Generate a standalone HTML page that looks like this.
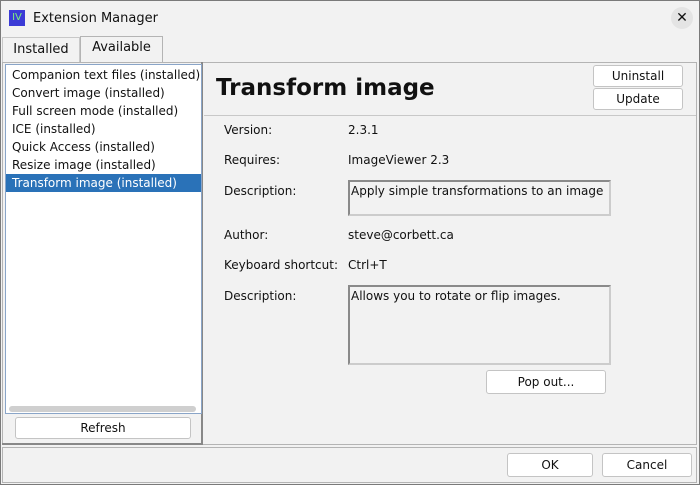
<!DOCTYPE html>
<html><head><style>
*{box-sizing:border-box;margin:0;padding:0}
body{width:700px;height:485px;background:#f2f2f2;font-family:"DejaVu Sans","Liberation Sans",sans-serif;font-size:12px;color:#111;position:relative;overflow:hidden}
.a{position:absolute}
.btn{position:absolute;background:#fff;border:1px solid #c4c4c4;border-radius:3px;text-align:center;line-height:20px;font-size:12px}
.lbl{position:absolute;left:224px}
.val{position:absolute;left:348px}
.ta{position:absolute;left:348px;width:263px;border:2px solid #8a8a8a;border-right-color:#ccc;border-bottom-color:#ccc;background:#f2f2f2;padding:2px 1px 0;line-height:15px}
.li{height:18px;line-height:18px;padding-left:6px;white-space:nowrap}
</style></head><body>
<div class="a" style="left:0;top:0;width:700px;height:485px;border:1px solid #7a7a7a"></div>
<div class="a" style="left:9px;top:10px;width:16px;height:16px;background:#3b3bd6;color:#7ef07e;font-size:10px;line-height:16px;text-align:center">IV</div>
<div class="a" style="left:33px;top:11px;font-size:13px">Extension Manager</div>
<div class="a" style="left:671px;top:7px;width:22px;height:22px;border-radius:11px;background:#e4e4e4;text-align:center;line-height:22px;font-size:14px">✕</div>
<div class="a" style="left:2px;top:37px;width:78px;height:26px;border:1px solid #c8c8c8;border-bottom:none;line-height:24px;text-align:center;font-size:13px">Installed</div>
<div class="a" style="left:80px;top:36px;width:83px;height:26px;border:1px solid #b4b4b4;border-bottom:none;line-height:22px;text-align:center;font-size:13px">Available</div>
<div class="a" style="left:2px;top:62px;width:695px;height:383px;border:1px solid #b4b4b4"></div>
<div class="a" style="left:2px;top:62px;width:201px;height:383px;border-right:2px solid #888;border-bottom:2px solid #888"></div>
<div class="a" style="left:5px;top:64px;width:197px;height:350px;background:#fff;border:1px solid #8aa5c8">
<div class="li" style="margin-top:1px">Companion text files (installed)</div>
<div class="li">Convert image (installed)</div>
<div class="li">Full screen mode (installed)</div>
<div class="li">ICE (installed)</div>
<div class="li">Quick Access (installed)</div>
<div class="li">Resize image (installed)</div>
<div class="li" style="background:#2a72b8;color:#fff">Transform image (installed)</div>
<div class="a" style="left:3px;top:341px;width:187px;height:6px;border-radius:3px;background:#cfcfcf"></div>
</div>
<div class="btn" style="left:15px;top:417px;width:176px;height:22px">Refresh</div>
<div class="a" style="left:204px;top:115px;width:492px;height:1px;background:#c8c8c8"></div>
<div class="a" style="left:216px;top:75px;font-size:23px;font-weight:bold;color:#111">Transform image</div>
<div class="btn" style="left:593px;top:65px;width:90px;height:22px">Uninstall</div>
<div class="btn" style="left:593px;top:88px;width:90px;height:22px">Update</div>
<div class="lbl" style="top:123px">Version:</div><div class="val" style="top:123px">2.3.1</div>
<div class="lbl" style="top:153px">Requires:</div><div class="val" style="top:153px">ImageViewer 2.3</div>
<div class="lbl" style="top:184px">Description:</div>
<div class="ta" style="top:180px;height:36px">Apply simple transformations to an image</div>
<div class="lbl" style="top:228px">Author:</div><div class="val" style="top:228px">steve@corbett.ca</div>
<div class="lbl" style="top:258px">Keyboard shortcut:</div><div class="val" style="top:258px">Ctrl+T</div>
<div class="lbl" style="top:289px">Description:</div>
<div class="ta" style="top:285px;height:80px">Allows you to rotate or flip images.</div>
<div class="btn" style="left:486px;top:370px;width:120px;height:24px;line-height:22px">Pop out...</div>
<div class="a" style="left:2px;top:447px;width:695px;height:36px;border:1px solid #b4b4b4"></div>
<div class="btn" style="left:507px;top:453px;width:86px;height:24px;line-height:22px">OK</div>
<div class="btn" style="left:602px;top:453px;width:90px;height:24px;line-height:22px">Cancel</div>
</body></html>
